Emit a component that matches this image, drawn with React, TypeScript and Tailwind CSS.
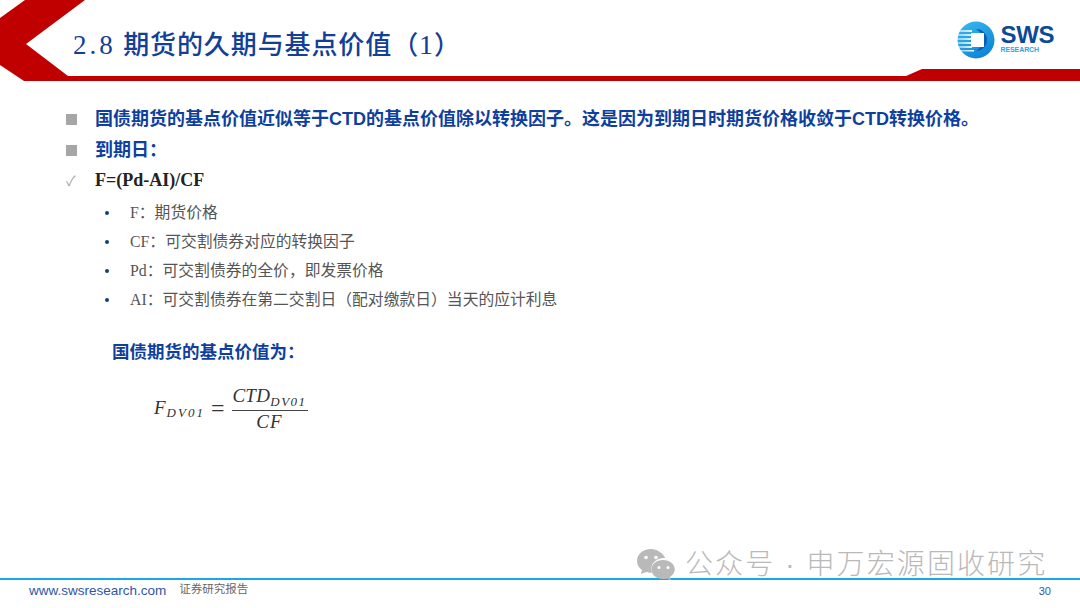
const cjkSans = "font-['Liberation_Sans','Noto_Sans_CJK_SC',sans-serif]";
const cjkSerif = "font-['Liberation_Serif','Noto_Sans_CJK_SC',serif]";

const terms = [
  { name: "F", text: "期货价格" },
  { name: "CF", text: "可交割债券对应的转换因子" },
  { name: "Pd", text: "可交割债券的全价，即发票价格" },
  { name: "AI", text: "可交割债券在第二交割日（配对缴款日）当天的应计利息" },
];

function HeaderShape() {
  return (
    <svg className="absolute inset-0" width="1080" height="82" viewBox="0 0 1080 82">
      <polygon
        points="0,18 25,0 85,0 26,44 68,76 906,76 922,69 1080,69 1080,81 24,81 0,65"
        fill="#c00000"
      />
    </svg>
  );
}

function Logo() {
  return (
    <div className="flex items-center gap-[6px]">
      <svg width="38" height="38" viewBox="0 0 38 38">
        <defs>
          <linearGradient id="ring" x1="0" y1="0" x2="0.6" y2="1">
            <stop offset="0" stopColor="#3dbcf0" />
            <stop offset="1" stopColor="#0d86d6" />
          </linearGradient>
          <linearGradient id="stripes" x1="0" y1="0" x2="1" y2="0">
            <stop offset="0" stopColor="#ffffff" stopOpacity="0.45" />
            <stop offset="1" stopColor="#ffffff" stopOpacity="0.95" />
          </linearGradient>
        </defs>
        <circle cx="19" cy="19" r="18.5" fill="url(#ring)" />
        <path d="M19 8a11 11 0 0 1 0 22c5-3 7-7 7-11s-2-8-7-11z" fill="#0a5fb4" />
        <path d="M0 9h15v2H0zM0 13h15v2H0zM0 17h15v2H0zM0 21h15v2H0zM0 25h15v2H0zM2 29h15v1.500H2z" fill="url(#stripes)" />
        <rect x="14" y="12" width="13" height="14" fill="#ffffff" />
      </svg>
      <div className="flex flex-col font-['Liberation_Sans',sans-serif] font-bold">
        <span className="text-[24px] leading-[20px] tracking-[-0.4px] text-[#0b4a96]">SWS</span>
        <span className="text-[7px] leading-[10px] tracking-[-0.1px] text-[#2ba6e6]">RESEARCH</span>
      </div>
    </div>
  );
}

function WeChatIcon() {
  return (
    <svg width="40" height="34" viewBox="0 0 40 34">
      <path d="M15 1C7 1 1 6 1 13c0 4 2 7 5 9l-1 4 5-2c2 .6 3 .8 5 .8h1c-.5-1.300-.7-2.500-.7-3.800 0-6.500 6-11 13-11h1C27 5 21 1 15 1z" fill="#b9b9b9" />
      <path d="M27 12c-6.500 0-11.500 4-11.500 9.500S20.500 31 27 31c1.500 0 2.500-.2 4-.6l4 2-1-3.500c3-2 4.800-4.500 4.800-7.400C38.800 16 33.500 12 27 12z" fill="#b9b9b9" />
      <circle cx="10" cy="9.500" r="1.800" fill="#fff" />
      <circle cx="20" cy="9.500" r="1.800" fill="#fff" />
      <circle cx="23" cy="19.500" r="1.500" fill="#fff" />
      <circle cx="32" cy="19.500" r="1.500" fill="#fff" />
    </svg>
  );
}

function Formula() {
  return (
    <div className="mt-[18px] ml-[154px] flex items-center font-['Liberation_Serif',serif] text-[#333] italic">
      <span className="text-[19px] tracking-[1px]">
        F<sub className="text-[13px] tracking-[2px]">DV01</sub>
      </span>
      <span className="mr-[7px] ml-[6px] text-[24px] leading-none font-light not-italic">=</span>
      <div className="flex w-[76px] flex-col items-center">
        <span className="w-full border-b border-[#444] pb-[2px] text-center text-[19px] leading-[25px] tracking-[0.3px]">
          CTD<sub className="text-[13px] tracking-[1.5px]">DV01</sub>
        </span>
        <span className="text-[19px] leading-[22px] tracking-[1px]">CF</span>
      </div>
    </div>
  );
}

export default function App() {
  return (
    <div className="relative flex h-[608px] w-[1080px] flex-col overflow-hidden bg-white">
      <header className="relative flex h-[82px] shrink-0 items-start justify-between">
        <HeaderShape />
        <h1 className={`relative mt-[27px] ml-[73px] text-[26px] leading-[36px] font-medium tracking-[0.9px] text-[#123f97] ${cjkSerif}`}>
          <span className="text-[27px] tracking-[3px]">2.8</span> 期货的久期与基点价值（<span className="text-[28px]">1</span>）
        </h1>
        <div className="relative mt-[21px] mr-[26px]">
          <Logo />
        </div>
      </header>

      <main className={`flex-1 pt-[25px] ${cjkSans}`}>
        <div className="flex h-[25px] items-center pl-[66px]">
          <span className="mr-[18px] h-[11px] w-[11px] bg-[#a6a6a6]" />
          <p className="text-[18px] leading-[25px] font-bold whitespace-nowrap text-[#0f3f9e]">
            国债期货的基点价值近似等于CTD的基点价值除以转换因子。这是因为到期日时期货价格收敛于CTD转换价格。
          </p>
        </div>
        <div className="mt-[6px] flex h-[25px] items-center pl-[66px]">
          <span className="mr-[18px] h-[11px] w-[11px] bg-[#a6a6a6]" />
          <p className="text-[18px] leading-[25px] font-bold text-[#0f3f9e]">到期日：</p>
        </div>
        <div className="mt-[5px] flex h-[25px] items-center pl-[66px]">
          <span className="mr-[17px] w-[12px] text-[14px] leading-none text-[#a6a6a6]">✓</span>
          <p className="font-['Liberation_Serif',serif] text-[18px] font-bold text-[#222]">F=(Pd-AI)/CF</p>
        </div>

        <ul className="mt-[8px] flex flex-col gap-[5px] pl-[105px]">
          {terms.map((t) => (
            <li key={t.name} className="flex h-[24px] items-center text-[15.8px] text-[#555]">
              <span className="mr-[21px] h-[4px] w-[4px] rounded-full bg-[#123f7f]" />
              <span className={cjkSerif}>{t.name}：</span>
              <span>{t.text}</span>
            </li>
          ))}
        </ul>

        <p className="mt-[27px] ml-[112px] text-[17.500px] font-bold text-[#0f3f9e]">国债期货的基点价值为：</p>
        <Formula />
      </main>

      <div className="absolute top-[546px] left-[636px] flex items-center gap-[9px]">
        <WeChatIcon />
        <span className={`text-[28px] leading-[38px] font-light tracking-[2.1px] whitespace-nowrap text-[#b9b9b9] ${cjkSans}`}>
          公众号 · 申万宏源固收研究
        </span>
      </div>

      <footer className={`flex h-[30px] shrink-0 items-center border-t-2 border-[#18a8e8] pr-[29px] pb-[5px] pl-[29px] ${cjkSans}`}>
        <span className="text-[13.500px] text-[#2f55a8]">www.swsresearch.com</span>
        <span className="mb-[3px] ml-[13px] text-[11.500px] text-[#666]">证券研究报告</span>
        <span className="ml-auto text-[11px] text-[#2f55a8]">30</span>
      </footer>
    </div>
  );
}
